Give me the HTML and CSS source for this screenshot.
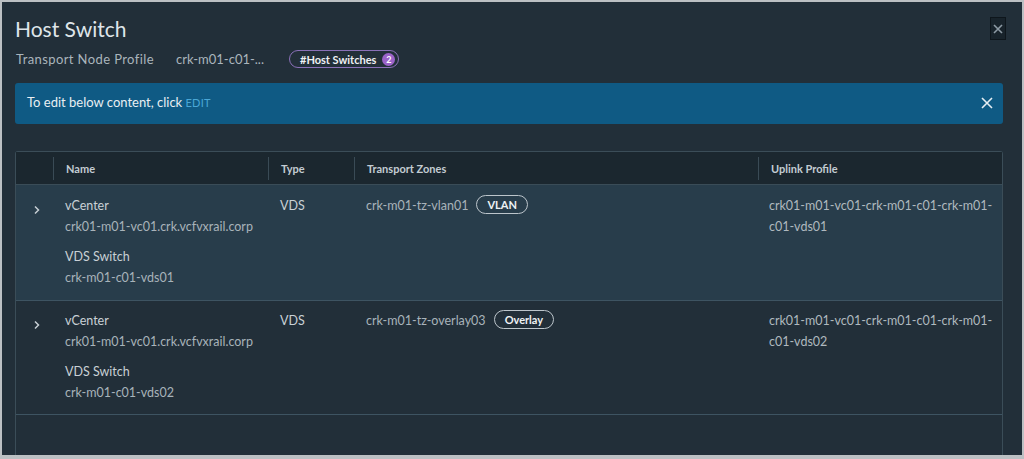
FILE: index.html
```html
<!DOCTYPE html>
<html lang="en">
<head>
<meta charset="utf-8">
<title>Host Switch</title>
<link rel="stylesheet" href="styles.css">
</head>
<body>
<div class="modal">
  <div class="modal-head">
    <div class="head-main">
      <h1 class="title">Host Switch</h1>
      <div class="sub">
        <span class="sub-label">Transport Node Profile</span>
        <span class="sub-value">crk-m01-c01-...</span>
        <span class="count-pill">#Host Switches <span class="count-badge">2</span></span>
      </div>
    </div>
    <button class="close-btn" aria-label="Close">
      <svg width="10" height="10" viewBox="0 0 10 10"><path d="M1 1 L9 9 M9 1 L1 9" stroke="#8d9aa4" stroke-width="1.6" fill="none"/></svg>
    </button>
  </div>

  <div class="banner">
    <span class="banner-text">To edit below content, click <span class="edit-link">EDIT</span></span>
    <svg class="banner-close" width="12" height="12" viewBox="0 0 12 12"><path d="M1 1 L11 11 M11 1 L1 11" stroke="#e6eef3" stroke-width="1.6" fill="none"/></svg>
  </div>

  <div class="grid">
    <div class="grid-row grid-header">
      <div class="hcell hcell-first"></div>
      <div class="hcell">Name</div>
      <div class="hcell">Type</div>
      <div class="hcell">Transport Zones</div>
      <div class="hcell">Uplink Profile</div>
    </div>

    <div class="grid-row body-row selected">
      <div class="cell cell-expand">
        <svg width="8" height="10" viewBox="0 0 8 10"><path d="M2 1.5 L5.5 5 L2 8.5" stroke="#c6ced3" stroke-width="1.5" fill="none"/></svg>
      </div>
      <div class="cell">
        <div class="group">
          <div class="label">vCenter</div>
          <div class="value">crk01-m01-vc01.crk.vcfvxrail.corp</div>
        </div>
        <div class="group">
          <div class="label">VDS Switch</div>
          <div class="value">crk-m01-c01-vds01</div>
        </div>
      </div>
      <div class="cell"><div class="label">VDS</div></div>
      <div class="cell">
        <div class="tz"><span class="value">crk-m01-tz-vlan01</span><span class="tag">VLAN</span></div>
      </div>
      <div class="cell cell-uplink"><div class="value uplink">crk01-m01-vc01-crk-m01-c01-crk-m01-c01-vds01</div></div>
    </div>

    <div class="grid-row body-row second">
      <div class="cell cell-expand">
        <svg width="8" height="10" viewBox="0 0 8 10"><path d="M2 1.5 L5.5 5 L2 8.5" stroke="#c6ced3" stroke-width="1.5" fill="none"/></svg>
      </div>
      <div class="cell">
        <div class="group">
          <div class="label">vCenter</div>
          <div class="value">crk01-m01-vc01.crk.vcfvxrail.corp</div>
        </div>
        <div class="group">
          <div class="label">VDS Switch</div>
          <div class="value">crk-m01-c01-vds02</div>
        </div>
      </div>
      <div class="cell"><div class="label">VDS</div></div>
      <div class="cell">
        <div class="tz"><span class="value">crk-m01-tz-overlay03</span><span class="tag">Overlay</span></div>
      </div>
      <div class="cell cell-uplink"><div class="value uplink">crk01-m01-vc01-crk-m01-c01-crk-m01-c01-vds02</div></div>
    </div>
  </div>
</div>
</body>
</html>
```

FILE: styles.css
```css
* { box-sizing: border-box; }

html, body {
  margin: 0;
  padding: 0;
}

body {
  background: #bcc0c3;
  width: 1024px;
  height: 459px;
  overflow: hidden;
  padding: 2px 2px 4px 2px;
  font-family: "Lato", "Noto Sans", sans-serif;
}

.modal {
  height: 453px;
  background: #222f39;
  display: flex;
  flex-direction: column;
  padding: 0 19px 0 13px;
  overflow: hidden;
}

.modal-head {
  display: flex;
  justify-content: space-between;
  align-items: flex-start;
  padding-top: 14px;
}

.title {
  margin: 0;
  font-size: 21px;
  line-height: 26px;
  font-weight: 400;
  color: #dfe5e9;
}

.sub {
  display: flex;
  align-items: center;
  margin-top: 8px;
  height: 18px;
  padding-left: 1px;
}

.sub-label {
  font-size: 13px;
  letter-spacing: 0.4px;
  color: #aab5bc;
  width: 160px;
}

.sub-value {
  font-size: 13px;
  color: #aab5bc;
  width: 113px;
}

.count-pill {
  display: inline-flex;
  align-items: center;
  height: 18px;
  padding: 0 3px 0 10px;
  border: 1.5px solid #8a70b8;
  border-radius: 9px;
  font-size: 11px;
  font-weight: 700;
  color: #eef1f4;
  gap: 6px;
}

.count-badge {
  display: inline-flex;
  align-items: center;
  justify-content: center;
  width: 13px;
  height: 13px;
  border-radius: 50%;
  background: #9b63c9;
  color: #ffffff;
  font-size: 9px;
  font-weight: 700;
}

.close-btn {
  width: 16px;
  height: 23px;
  margin-top: 1px;
  margin-right: -3px;
  padding: 0;
  background: #18232b;
  border: 1px solid #0e161c;
  display: flex;
  align-items: center;
  justify-content: center;
}

.banner {
  margin-top: 15px;
  height: 41px;
  background: #0f5a84;
  border-radius: 3px;
  display: flex;
  align-items: center;
  justify-content: space-between;
  padding: 0 10px 3px 12px;
}

.banner-text {
  font-size: 13px;
  color: #e9eff3;
}

.edit-link {
  font-size: 11px;
  color: #4aa7d6;
  letter-spacing: 0.2px;
}

.banner-close {
  margin-top: 1px;
}

.grid {
  margin-top: 27px;
  flex: 1;
  border: 1px solid #3b4d58;
  border-bottom: none;
  border-radius: 3px 3px 0 0;
}

.grid-row {
  display: grid;
  grid-template-columns: 37px 215px 86px 404px 1fr;
}

.grid-header {
  height: 33px;
  background: #1b272f;
  border-bottom: 1px solid #3a4c57;
  align-items: center;
}

.hcell {
  height: 23px;
  line-height: 23px;
  font-size: 11px;
  font-weight: 700;
  color: #c3ccd2;
  padding-left: 12px;
  border-left: 1px solid #3a4b56;
}

.hcell-first {
  border-left: none;
}

.body-row {
  border-bottom: 1px solid #3e5462;
  padding: 10px 0 12px;
}

.body-row.selected {
  background: #283d4b;
}

.body-row.second {
  padding: 9px 0 11px;
}

.cell {
  padding: 0 12px;
  font-size: 12.5px;
  line-height: 21px;
}

.cell-uplink {
  padding: 0 0 0 11px;
}

.cell-expand {
  padding: 5px 0 0 17px;
}

.group + .group {
  margin-top: 9px;
}

.label {
  color: #c9d1d6;
}

.value {
  color: #a8b3ba;
}

.uplink {
  color: #afb9bf;
  max-width: 226px;
}

.tz {
  display: flex;
  align-items: center;
  gap: 8px;
  height: 21px;
}

.tag {
  display: inline-flex;
  align-items: center;
  height: 19px;
  padding: 0 10px;
  border: 1.5px solid #bcc5cb;
  border-radius: 10px;
  font-size: 11px;
  font-weight: 700;
  color: #eef2f4;
  line-height: 1;
  margin-top: -2px;
}
```
